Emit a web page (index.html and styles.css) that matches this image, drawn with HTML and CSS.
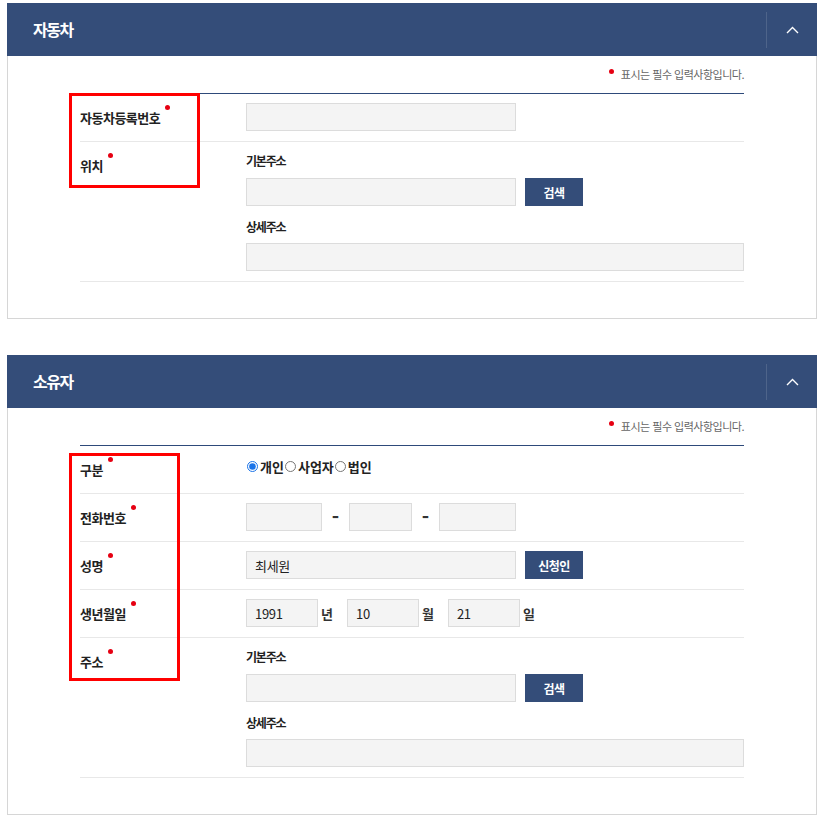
FILE: index.html
```html
<!DOCTYPE html>
<html lang="ko">
<head>
    <meta charset="UTF-8">
    <meta name="viewport" content="width=device-width, initial-scale=1.0">
    <title>자동차 / 소유자</title>
    <link rel="stylesheet" href="styles.css">
</head>
<body>
    <div class="page">

        <!-- 자동차 -->
        <section class="panel">
            <div class="panel-head">
                <h2 class="panel-title">자동차</h2>
                <button class="panel-toggle" type="button" aria-label="접기">
                    <svg width="13" height="8" viewBox="0 0 13 8"><polyline points="1,7 6.5,1.5 12,7" fill="none" stroke="#fff" stroke-width="1.4"/></svg>
                </button>
            </div>
            <div class="panel-body">
                <p class="req-note"><span class="req-dot"></span>표시는 필수 입력사항입니다.</p>

                <div class="form-row">
                    <div class="form-label">자동차등록번호<span class="req"></span></div>
                    <div class="form-field">
                        <input class="field w-270" type="text">
                    </div>
                </div>
                <div class="form-row">
                    <div class="form-label">위치<span class="req"></span></div>
                    <div class="form-field">
                        <p class="sub-label">기본주소</p>
                        <div class="field-line">
                            <input class="field w-270" type="text">
                            <button class="btn" type="button">검색</button>
                        </div>
                        <p class="sub-label sub-label-next">상세주소</p>
                        <input class="field w-full" type="text">
                    </div>
                </div>

                <div class="mark mark-car"></div>
            </div>
        </section>

        <!-- 소유자 -->
        <section class="panel">
            <div class="panel-head">
                <h2 class="panel-title">소유자</h2>
                <button class="panel-toggle" type="button" aria-label="접기">
                    <svg width="13" height="8" viewBox="0 0 13 8"><polyline points="1,7 6.5,1.5 12,7" fill="none" stroke="#fff" stroke-width="1.4"/></svg>
                </button>
            </div>
            <div class="panel-body">
                <p class="req-note"><span class="req-dot"></span>표시는 필수 입력사항입니다.</p>

                <div class="form-row">
                    <div class="form-label">구분<span class="req"></span></div>
                    <div class="form-field">
                        <div class="radio-group">
                            <label class="radio"><input type="radio" name="kind" checked>개인</label>
                            <label class="radio"><input type="radio" name="kind">사업자</label>
                            <label class="radio"><input type="radio" name="kind">법인</label>
                        </div>
                    </div>
                </div>
                <div class="form-row">
                    <div class="form-label">전화번호<span class="req"></span></div>
                    <div class="form-field field-line-tight">
                        <input class="field w-76" type="text">
                        <span class="dash">-</span>
                        <input class="field w-63" type="text">
                        <span class="dash">-</span>
                        <input class="field w-77" type="text">
                    </div>
                </div>
                <div class="form-row">
                    <div class="form-label">성명<span class="req"></span></div>
                    <div class="form-field">
                        <div class="field-line">
                            <input class="field w-270" type="text" value="최세원">
                            <button class="btn" type="button">신청인</button>
                        </div>
                    </div>
                </div>
                <div class="form-row">
                    <div class="form-label">생년월일<span class="req"></span></div>
                    <div class="form-field field-line-tight">
                        <input class="field w-72" type="text" value="1991">
                        <span class="unit">년</span>
                        <input class="field w-72" type="text" value="10">
                        <span class="unit">월</span>
                        <input class="field w-72" type="text" value="21">
                        <span class="unit">일</span>
                    </div>
                </div>
                <div class="form-row">
                    <div class="form-label">주소<span class="req"></span></div>
                    <div class="form-field">
                        <p class="sub-label">기본주소</p>
                        <div class="field-line">
                            <input class="field w-270" type="text">
                            <button class="btn" type="button">검색</button>
                        </div>
                        <p class="sub-label sub-label-next">상세주소</p>
                        <input class="field w-full" type="text">
                    </div>
                </div>

                <div class="mark mark-owner"></div>
            </div>
        </section>

    </div>
</body>
</html>
```

FILE: styles.css
```css
body {
    margin: 0;
    padding: 0;
    background: #fff;
    font-family: "Noto Sans CJK KR", "Noto Sans", sans-serif;
    color: #333;
}
.page {
    width: 810px;
    padding: 3px 0 0 7px;
}

.panel {
    margin-bottom: 36px;
}
.panel-head {
    display: flex;
    align-items: center;
    height: 53px;
    background-color: #344d79;
}
.panel-title {
    flex: 1;
    margin: 0;
    padding-left: 26px;
    color: #fff;
    font-size: 16px;
    font-weight: bold;
    letter-spacing: -1.5px;
    line-height: 53px;
}
.panel-toggle {
    width: 51px;
    height: 36px;
    margin-top: 1px;
    padding: 0;
    border: none;
    border-left: 1px solid rgba(255, 255, 255, 0.13);
    background: transparent;
    display: flex;
    align-items: center;
    justify-content: center;
    cursor: pointer;
}

.panel-body {
    position: relative;
    padding: 0 72px 36px;
    border: 1px solid #d6d6d6;
    border-top: none;
}
.req-note {
    margin: 0;
    padding: 10px 0 11px;
    text-align: right;
    font-size: 11px;
    line-height: 16px;
    letter-spacing: -0.5px;
    color: #666;
    border-bottom: 1px solid #2e4a7a;
}
.req-dot {
    display: inline-block;
    width: 5px;
    height: 5px;
    margin-right: 7px;
    border-radius: 50%;
    background: #e60012;
    vertical-align: middle;
    position: relative;
    top: -5px;
}

.form-row {
    display: flex;
    padding: 9px 0 10px;
    border-bottom: 1px solid #e8e8e8;
}
.form-label {
    flex: none;
    width: 166px;
    padding-top: 5px;
    font-size: 13px;
    font-weight: bold;
    line-height: 20px;
    letter-spacing: -0.5px;
    color: #222;
}
/* 필수 표시 점 */
.req {
    display: inline-block;
    width: 5px;
    height: 5px;
    margin-left: 5px;
    border-radius: 50%;
    background: #e60012;
    vertical-align: middle;
    position: relative;
    top: -12px;
}
.form-field {
    flex: 1;
    min-height: 28px;
}
.sub-label {
    margin: 0 0 7px;
    font-size: 12px;
    font-weight: bold;
    line-height: 20px;
    letter-spacing: -1.2px;
    color: #222;
}
.sub-label-next {
    margin: 11px 0 6px;
}
.field-line {
    display: flex;
    align-items: center;
    gap: 9px;
}
.field-line-tight {
    display: flex;
    align-items: center;
}

.field {
    display: block;
    box-sizing: border-box;
    height: 28px;
    margin: 0;
    padding: 0 8px;
    border: 1px solid #dcdcdc;
    background: #f4f4f4;
    font-family: inherit;
    font-size: 13px;
    letter-spacing: -0.3px;
    color: #222;
    outline: none;
}
.w-270 { width: 270px; }
.w-full { width: 100%; }
.w-76 { width: 76px; }
.w-63 { width: 63px; }
.w-77 { width: 77px; }
.w-72 { width: 72px; }

.btn {
    width: 58px;
    height: 28px;
    padding: 0;
    border: none;
    background-color: #344d79;
    color: #fff;
    font-family: inherit;
    font-size: 12px;
    font-weight: bold;
    letter-spacing: -0.5px;
    cursor: pointer;
}

.dash {
    width: 27px;
    text-align: center;
    font-size: 20px;
    font-weight: bold;
    line-height: 20px;
    color: #333;
}
.unit {
    margin: 0 14px 0 3px;
    font-size: 13px;
    font-weight: bold;
    color: #333;
}

.radio-group {
    display: flex;
    align-items: center;
    height: 22px;
    font-size: 13px;
    font-weight: bold;
    letter-spacing: 0;
    color: #222;
}
.radio {
    display: flex;
    align-items: center;
    cursor: pointer;
}
.radio input {
    width: 11px;
    height: 11px;
    margin: 0 2px 0 1px;
    accent-color: #1a73e8;
}

/* 검토용 표시 박스 */
.mark {
    position: absolute;
    left: 61px;
    box-sizing: border-box;
    border: 3px solid #f00;
    pointer-events: none;
}
.mark-car {
    top: 37px;
    width: 131px;
    height: 95px;
}
.mark-owner {
    top: 45px;
    width: 111px;
    height: 228px;
}
```
